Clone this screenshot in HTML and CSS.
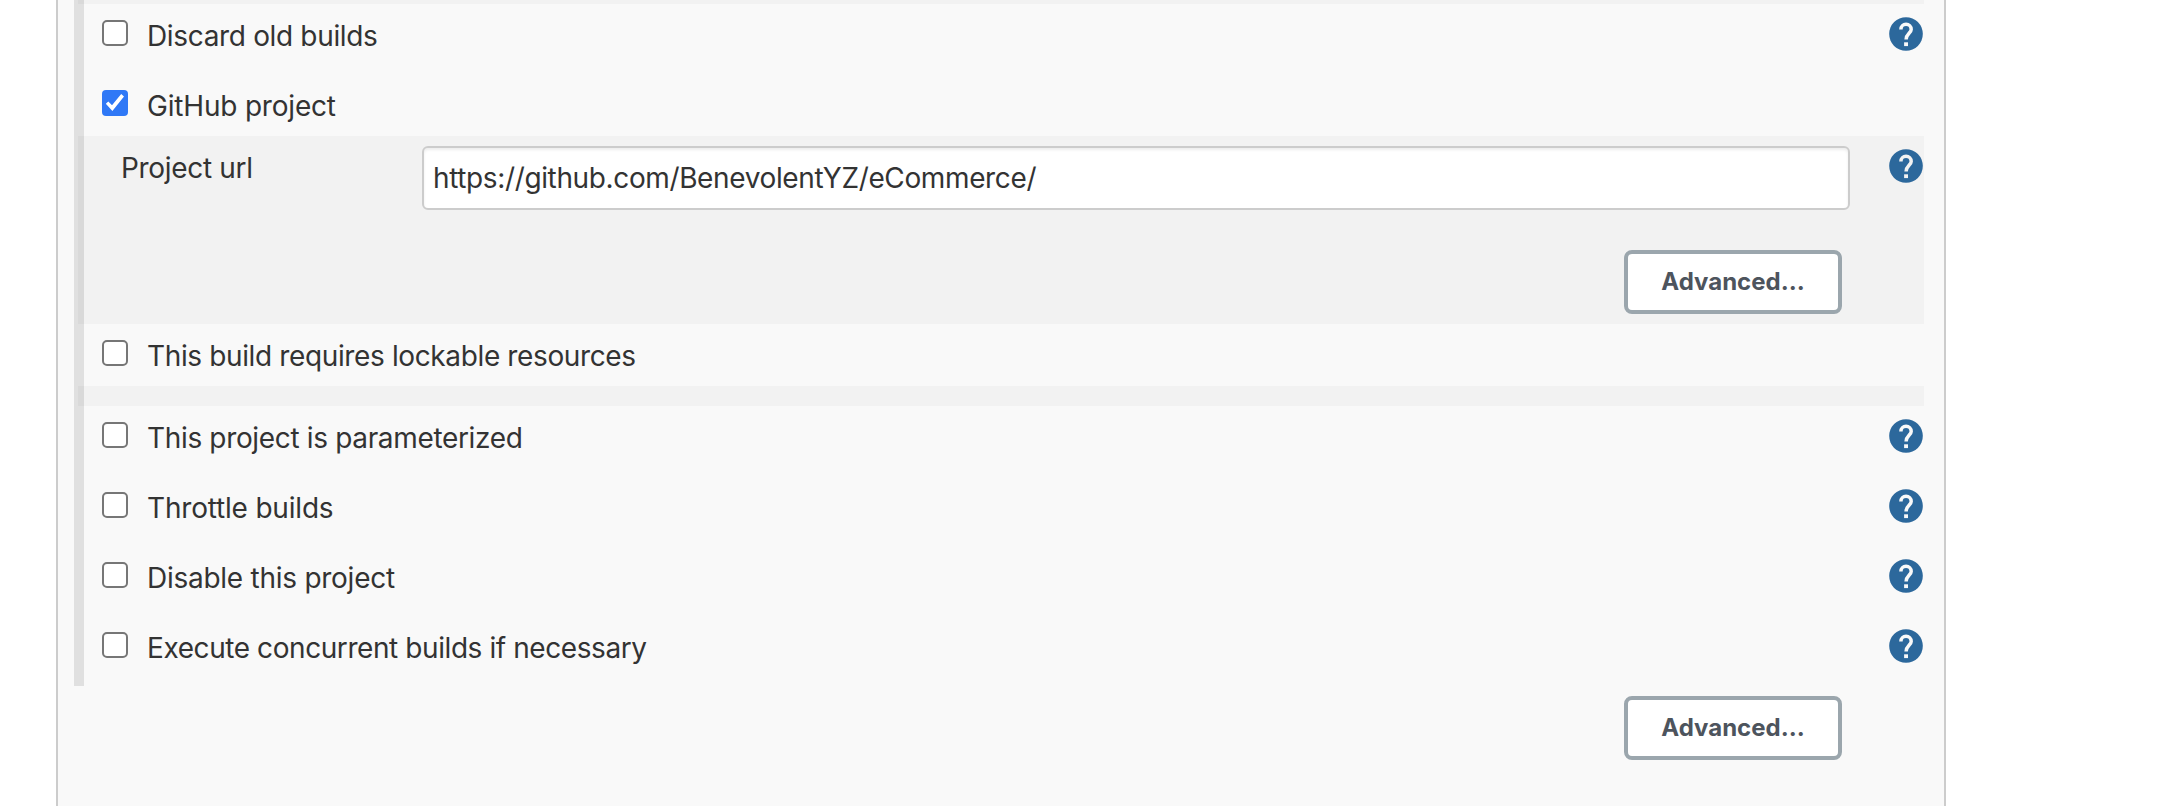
FILE: index.html
```html
<!DOCTYPE html>
<html lang="en">
<head>
<meta charset="utf-8">
<title>Project configuration</title>
<link rel="stylesheet" href="styles.css">
</head>
<body>
<svg class="defs" width="0" height="0">
  <symbol id="help" viewBox="-17 -17 34 34">
    <circle r="16.8" fill="#2c689c"/>
    <path d="M-5.1 -4.6a5.15 5.15 0 0 1 10.3 0C5.2 -.9 .1 -.3 .1 5.4" fill="none" stroke="currentColor" stroke-width="3.5"/>
    <path d="M-1.9 8.3h3.9v3.8h-3.9z" fill="currentColor"/>
  </symbol>
</svg>
<main class="panel">
  <div class="options">
    <div class="band band-top"></div>
    <div class="row"><input class="check" type="checkbox" id="c1"><label class="label" for="c1">Discard old builds</label><svg class="help"><use href="#help"/></svg></div>
    <div class="row row-short"><input class="check" type="checkbox" id="c2" checked><label class="label label-loose" for="c2">GitHub project</label></div>
    <section class="nested">
      <div class="field">
        <label class="field-name" for="url">Project url</label>
        <input class="url" id="url" type="text" value="https://github.com/BenevolentYZ/eCommerce/">
        <svg class="help"><use href="#help"/></svg>
      </div>
      <div class="actions"><button class="button">Advanced...</button></div>
    </section>
    <div class="row row-short"><input class="check" type="checkbox" id="c3"><label class="label label-tight" for="c3">This build requires lockable resources</label></div>
    <div class="band"></div>
    <div class="row"><input class="check" type="checkbox" id="c4"><label class="label" for="c4">This project is parameterized</label><svg class="help"><use href="#help"/></svg></div>
    <div class="row"><input class="check" type="checkbox" id="c5"><label class="label label-loose" for="c5">Throttle builds</label><svg class="help"><use href="#help"/></svg></div>
    <div class="row"><input class="check" type="checkbox" id="c6"><label class="label label-medium" for="c6">Disable this project</label><svg class="help"><use href="#help"/></svg></div>
    <div class="row"><input class="check" type="checkbox" id="c7"><label class="label label-tighter" for="c7">Execute concurrent builds if necessary</label><svg class="help"><use href="#help"/></svg></div>
  </div>
  <div class="actions"><button class="button">Advanced...</button></div>
</main>
</body>
</html>
```
FILE: styles.css
```css
* { box-sizing: border-box; }
body {
  margin: 0;
  height: 806px;
  overflow: hidden;
  background: #fff;
  color: #333;
  font: 28px/40px Inter, "Liberation Sans", sans-serif;
}
.defs { display: block; }
.panel {
  width: 1890px;
  height: 806px;
  margin-left: 56px;
  padding: 0 20px 0 16px;
  border: solid #ccc;
  border-width: 0 2px;
  background: #f9f9f9;
}
.options { border-left: 10px solid #e0e0e0; }
.row {
  display: flex;
  align-items: flex-start;
  height: 70px;
  padding: 0 1px 0 18px;
}
.row-short { height: 62px; }
.band, .nested {
  margin-left: -6px;
  border-left: 6px solid #d9d9d9;
  background: #f2f2f2;
}
.band { height: 20px; }
.band-top { height: 4px; }
.check {
  appearance: none;
  flex: none;
  width: 26px;
  height: 26px;
  margin: 16px 19px 0 0;
  border: 2px solid #767676;
  border-radius: 5px;
  background: #fff;
}
.check:checked { border: 0; border-radius: 4px; background: #2f78f6; }
.check:checked::after {
  content: "";
  display: block;
  width: 26px;
  height: 26px;
  background: #fff;
  clip-path: polygon(3.8px 13.8px, 6.3px 11.4px, 10px 15.2px, 19.2px 4px, 22px 6.4px, 10.4px 21px);
}
.label { margin-top: 12px; white-space: nowrap; letter-spacing: -.34px; }
.label-loose { letter-spacing: -.19px; }
.label-medium { letter-spacing: -.26px; }
.label-tight { letter-spacing: -.37px; }
.label-tighter { letter-spacing: -.42px; }
.help {
  flex: none;
  width: 34px;
  height: 34px;
  margin: 13px 0 0 auto;
  color: #f9f9f9;
}
.nested { height: 188px; }
.nested .help { color: #f2f2f2; }
.field { display: flex; align-items: flex-start; height: 104px; padding: 0 1px 0 37px; }
.field-name { width: 301px; margin-top: 12px; letter-spacing: -.32px; }
.url {
  width: 1428px;
  height: 64px;
  margin: 10px 0 0;
  padding: 0 9px;
  border: 2px solid #ccc;
  border-radius: 6px;
  background: #fff;
  box-shadow: inset 0 2px 3px rgba(0, 0, 0, .075);
  color: #333;
  font: inherit;
  letter-spacing: -.37px;
  outline: 0;
}
.actions { display: flex; justify-content: flex-end; padding: 10px 82px 0 0; }
.button {
  width: 218px;
  height: 64px;
  padding: 0;
  border: 4px solid #9ba6ad;
  border-radius: 8px;
  background: #fff;
  color: #4d545d;
  font: 700 24px/56px Inter, "Liberation Sans", sans-serif;
}
```
